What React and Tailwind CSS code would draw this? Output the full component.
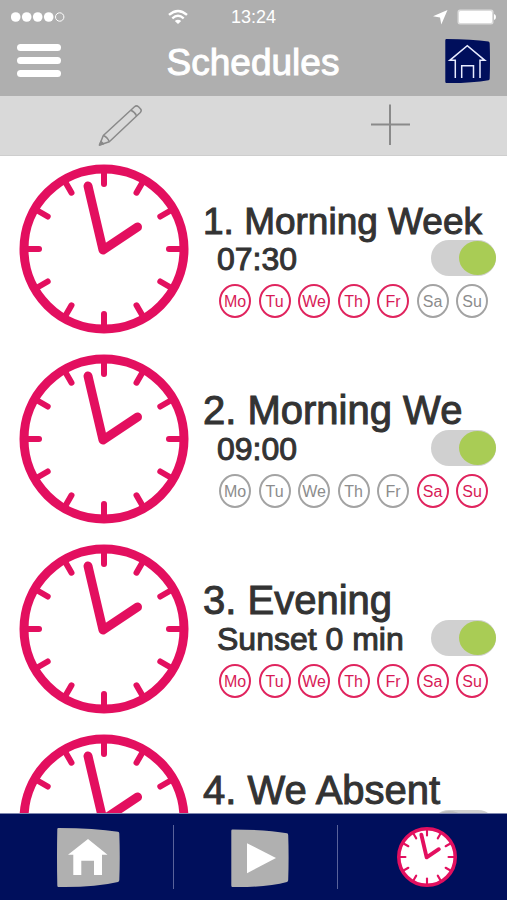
import React from "react";

const DAYS = ["Mo", "Tu", "We", "Th", "Fr", "Sa", "Su"];

const SCHEDULES = [
  { id: 1, name: "Morning Week", time: "07:30", active: ["Mo", "Tu", "We", "Th", "Fr"], enabled: true, long: true },
  { id: 2, name: "Morning We", time: "09:00", active: ["Sa", "Su"], enabled: true },
  { id: 3, name: "Evening", time: "Sunset 0 min", active: DAYS, enabled: true },
  { id: 4, name: "We Absent", enabled: false },
];

const TICKS = [0, 30, 60, 90, 120, 150, 180, 210, 240, 270, 300, 330];

function Clock({ className, small }) {
  return (
    <svg viewBox="0 0 170 170" className={className} aria-hidden="true">
      <circle cx="85" cy="85" r="80" fill="#fff" stroke="#e30f5f" strokeWidth={small ? 10 : 9} />
      <g stroke="#e30f5f" strokeLinecap="round" strokeWidth="6">
        {TICKS.map((a) => (
          <path key={a} d={small ? "M85 7V24" : "M85 7V20"} transform={`rotate(${a} 85 85)`} />
        ))}
      </g>
      <path d="M69 22L84 86L118.500 63" fill="none" stroke="#e30f5f" strokeWidth={small ? 11 : 9} strokeLinecap="round" strokeLinejoin="round" />
    </svg>
  );
}

function StatusBar() {
  return (
    <div className="grid h-[34px] grid-cols-[1fr_auto_1fr] items-center px-[11px] text-lg leading-none">
      <div className="flex items-center justify-between pr-[43px]">
        <svg viewBox="0 0 54 12" className="h-3 w-[54px]" fill="#fff" aria-label="Signal">
          <circle cx="4.700" cy="6" r="4.800" />
          <circle cx="15.700" cy="6" r="4.800" />
          <circle cx="26.700" cy="6" r="4.800" />
          <circle cx="37.700" cy="6" r="4.800" />
          <circle cx="48.700" cy="6" r="4.200" fill="none" stroke="#fff" strokeWidth="1" />
        </svg>
        <svg viewBox="0 0 20 16" className="h-4 w-5" fill="none" stroke="#fff" strokeWidth="2.400" aria-label="Wi-Fi">
          <path d="M1 5.800Q10 -2 19 5.800" />
          <path d="M4.300 9.300Q10 4.400 15.700 9.300" />
          <path d="M10 15L6.800 11.900Q10 9.400 13.200 11.900Z" fill="#fff" stroke="none" />
        </svg>
      </div>
      <span>13:24</span>
      <div className="flex items-center justify-end gap-2">
        <svg viewBox="0 0 16 16" className="size-4" fill="#fff" aria-label="Location">
          <path d="M15.500 1L9.300 15.500L8 8.500L1 7.300Z" />
        </svg>
        <svg viewBox="0 0 40 16" className="h-4 w-10" fill="#fff" aria-label="Battery">
          <rect x="1.500" y="0.500" width="36" height="15" rx="2.500" fill="#dcdcdc" />
          <rect x="3" y="2" width="33" height="12" rx="1.500" />
          <path d="M38 5Q40 5.500 40 8T38 11Z" />
        </svg>
      </div>
    </div>
  );
}

function Header() {
  return (
    <header className="shrink-0 bg-[#afafaf] pb-2 text-white">
      <StatusBar />
      <div className="flex h-[54px] items-center justify-between px-[17px]">
        <button type="button" aria-label="Menu" className="flex w-11 flex-col gap-[6px] pb-[2px]">
          <span className="h-[7px] w-full rounded-full bg-white" />
          <span className="h-[7px] w-full rounded-full bg-white" />
          <span className="h-[7px] w-full rounded-full bg-white" />
        </button>
        <h1 className="pt-1 text-[37px] leading-10 [-webkit-text-stroke:1px_white]">Schedules</h1>
        <button type="button" aria-label="Home">
          <svg viewBox="0 0 45 46" className="h-[46px] w-[45px]">
            <path d="M1.500 1Q27 1 43.500 3.500Q44.700 4 44.700 5.500Q45.300 23 44.700 40.500Q44.700 42 43.500 42.200Q27 45.200 1.500 45Q0.300 45 0.300 43.800V2.200Q0.300 1 1.500 1Z" fill="#000f5c" />
            <path d="M10.300 40V22.300H4.800L22.300 7.700L39.800 22.300H35V40M16.700 40V27.700H28.500V40" fill="none" stroke="#e8ecff" strokeWidth="1.500" />
          </svg>
        </button>
      </div>
    </header>
  );
}

function Toolbar() {
  return (
    <div className="flex h-[60px] shrink-0 items-center justify-between border-b border-[#cecece] bg-[#d9d9d9] px-24 pb-[2px] text-[#8a8a8a]">
      <button type="button" aria-label="Edit schedules">
        <svg viewBox="0 0 48 48" className="size-12" fill="none" stroke="currentColor" strokeWidth="1.500" strokeLinejoin="round">
          <path d="M3.500 44L7.300 34.500L38.500 5.700Q40.500 4 42.500 5.700L44.600 8Q46 9.700 44.300 11.500L13.300 40.800Z" />
          <path d="M7.300 34.500Q11.500 36 13.300 40.800M34.800 9.300Q39 11 40.600 15" />
          <path d="M3.500 44L5 40.500L7.500 42.800Z" fill="currentColor" />
        </svg>
      </button>
      <button type="button" aria-label="Add schedule">
        <svg viewBox="0 0 40 42" className="h-[42px] w-10" fill="none" stroke="currentColor" strokeWidth="2">
          <path d="M19 0.500V41M-1 20.500H39" />
        </svg>
      </button>
    </div>
  );
}

function Day({ label, on }) {
  return (
    <li
      className={
        on
          ? "flex h-[34px] w-8 items-center justify-center rounded-[50%] border-2 border-[#e0245e] pt-px text-base text-[#d81b57]"
          : "flex h-[34px] w-8 items-center justify-center rounded-[50%] border-2 border-[#a3a3a3] pt-px text-base text-[#8c8c8c]"
      }
    >
      {label}
    </li>
  );
}

function Schedule({ item }) {
  const titleId = `schedule-${item.id}-title`;
  const inputId = `schedule-${item.id}`;
  return (
    <li className="flex h-[190px] pl-[19px]">
      <Clock className="mt-[9px] size-[170px] shrink-0" />
      <div className="min-w-0 flex-1 pt-[45px] pl-[14px] text-[#333]">
        <h2
          id={titleId}
          className={
            item.long
              ? "h-10 text-[37px] leading-[44px] whitespace-nowrap [-webkit-text-stroke:1px_#333]"
              : "h-10 text-[40px] leading-10 whitespace-nowrap [-webkit-text-stroke:1px_#333]"
          }
        >
          {item.id}. {item.name}
        </h2>
        <div className="flex h-9 items-center pr-[11px] pl-[14px]">
          {item.time && (
            <label htmlFor={inputId} className="pt-[2px] text-[32px] leading-8 whitespace-nowrap [-webkit-text-stroke:1px_#333]">
              {item.time}
            </label>
          )}
          <input
            id={inputId}
            type="checkbox"
            aria-labelledby={titleId}
            defaultChecked={item.enabled}
            className="ml-auto flex h-9 w-[65px] shrink-0 appearance-none items-center rounded-full bg-[#d0d0d0] before:h-[34px] before:w-[37px] before:rounded-[50%] before:bg-[#bdbdbd] checked:justify-end checked:before:bg-[#a9cc55]"
          />
        </div>
        {item.active && (
          <ul className="mt-2 flex justify-between pr-[19px] pl-4">
            {DAYS.map((d) => (
              <Day key={d} label={d} on={item.active.includes(d)} />
            ))}
          </ul>
        )}
      </div>
    </li>
  );
}

function TabBar() {
  return (
    <nav className="grid h-[87px] shrink-0 grid-cols-[174fr_164fr_169fr] items-center border-t border-[#8088b0] bg-[#000f5c]">
      <button type="button" aria-label="Home" className="flex h-16 items-center justify-center border-r border-[#59629a] pl-1">
        <svg viewBox="0 0 63 61" className="h-[61px] w-[63px]">
          <path d="M1.500 1Q38 1 61 4.800Q62.300 5 62.300 6.500Q63.200 30 62.300 53Q62.300 54.500 61 55Q38 60.500 1.500 60Q0.300 60 0.300 58.500Q-0.300 30 0.300 2Q0.300 1 1.500 1Z" fill="#b0b0b0" />
          <path d="M31 12L50.500 27.700H45V48H37V33.700H24.300V48H16.300V27.700H11Z" fill="#fff" />
        </svg>
      </button>
      <button type="button" aria-label="Play" className="flex h-16 items-center justify-center border-r border-[#59629a] pl-2">
        <svg viewBox="0 0 58 61" className="h-[61px] w-[58px]">
          <path d="M1.500 2.500Q35 2.500 56 6.200Q57.200 6.500 57.200 8Q58 30 57.200 53Q57.200 54.500 56 55Q35 60.500 1.500 60Q0.300 60 0.300 58.500V3.700Q0.300 2.500 1.500 2.500Z" fill="#b0b0b0" />
          <path d="M16 16.300L45 31L16 46.300Z" fill="#fff" />
        </svg>
      </button>
      <button type="button" aria-label="Schedules" className="flex h-16 items-center justify-center pl-2">
        <Clock small className="size-[60px]" />
      </button>
    </nav>
  );
}

export default function App() {
  return (
    <div className="flex h-screen flex-col bg-white font-['Liberation_Sans',Arial,sans-serif]">
      <Header />
      <Toolbar />
      <main className="-mt-px min-h-0 flex-1 overflow-y-auto [scrollbar-width:none]">
        <ul>
          {SCHEDULES.map((item) => (
            <Schedule key={item.id} item={item} />
          ))}
        </ul>
      </main>
      <TabBar />
    </div>
  );
}
